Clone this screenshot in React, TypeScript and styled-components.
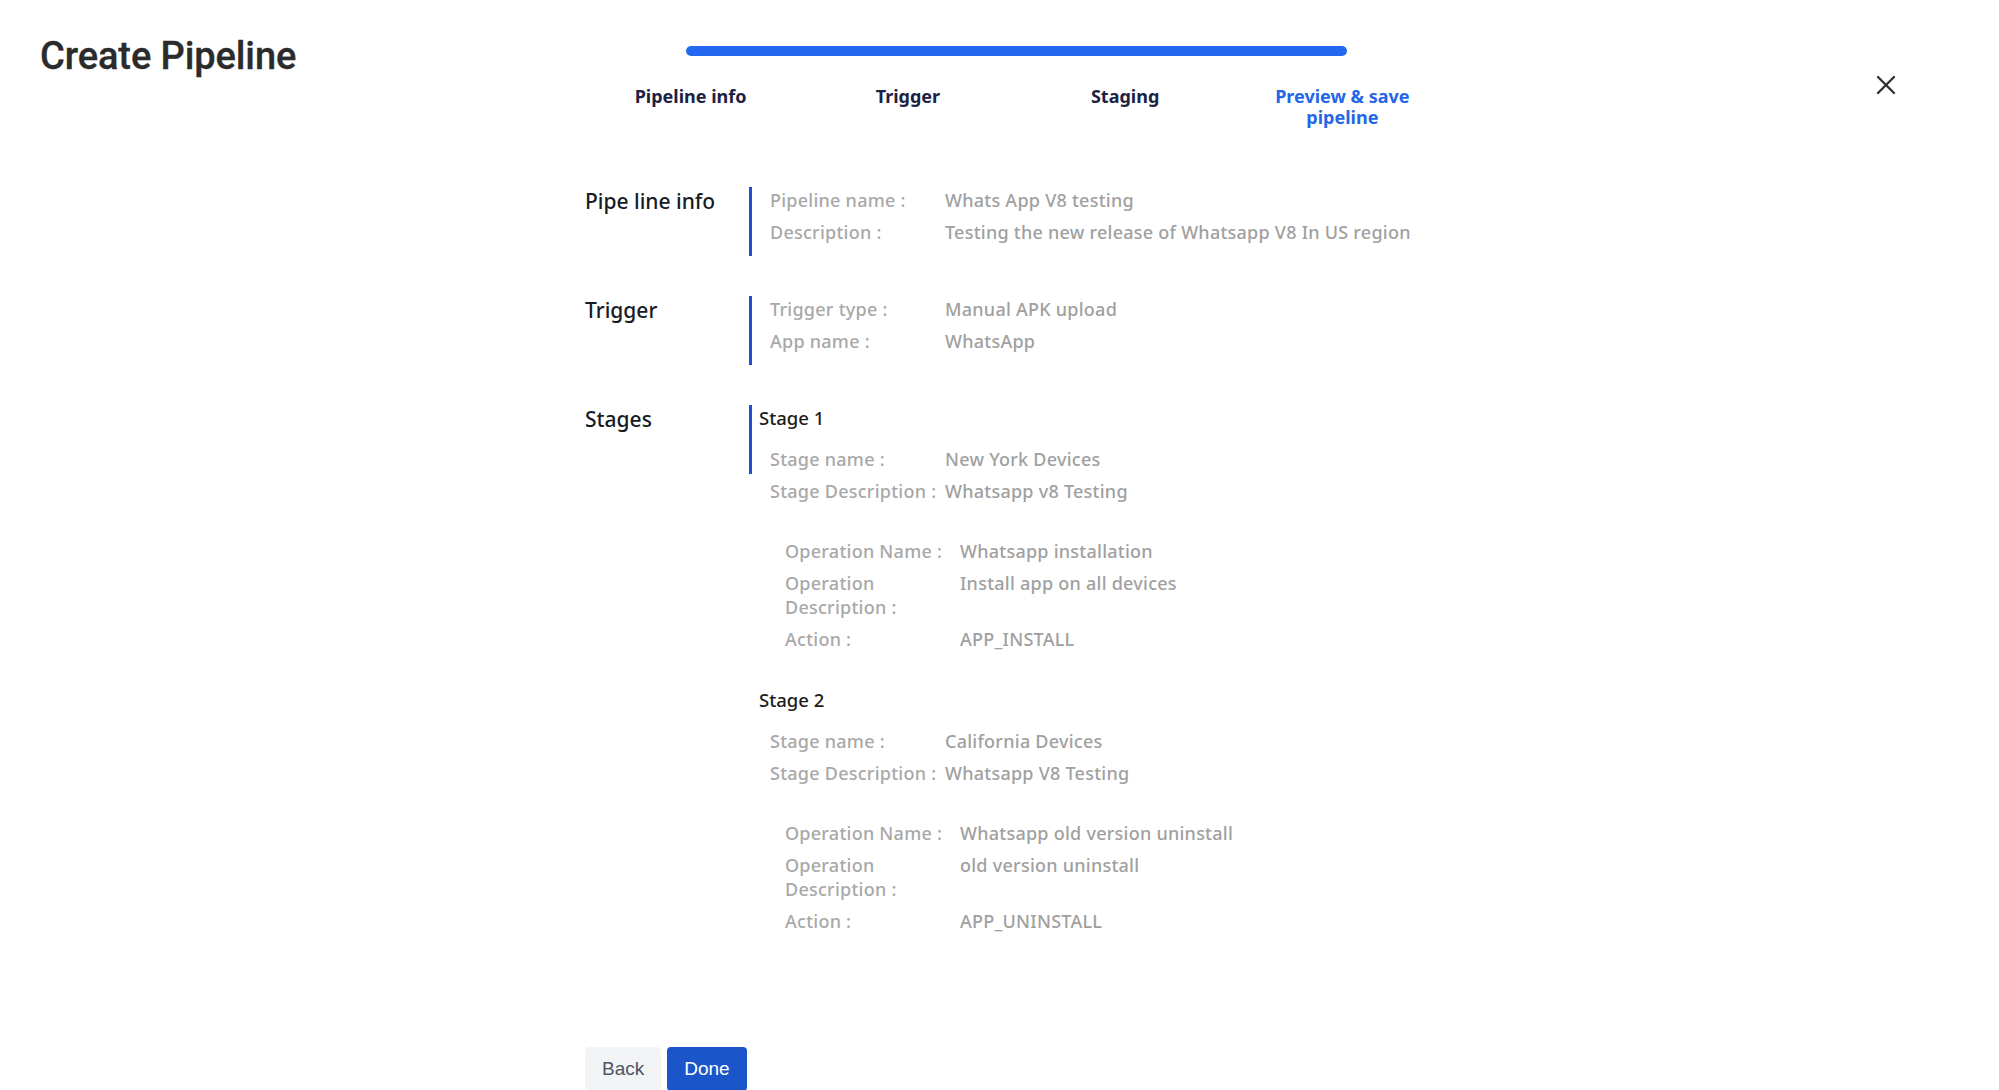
import React from "react";
import styled, { createGlobalStyle } from "styled-components";

const GlobalStyle = createGlobalStyle`
  html, body { margin: 0; padding: 0; background: #ffffff; }
  body { font-family: "Noto Sans", "Open Sans", sans-serif; -webkit-font-smoothing: antialiased; }
  * { box-sizing: border-box; }
`;

const Page = styled.div`
  display: grid;
  grid-template-columns: 585px 866px 1fr;
  grid-template-rows: 126px auto;
  width: 1999px;
  min-height: 1090px;
`;

const Title = styled.h1`
  margin: 32px 0 0 40px;
  font-family: Roboto, "Noto Sans", sans-serif;
  font-size: 38px;
  line-height: 48px;
  font-weight: 500;
  color: #2b2b2b;
  letter-spacing: -0.1px;
  -webkit-text-stroke: 0.3px #2b2b2b;
`;

const Steps = styled.div`
  display: flex;
  flex-direction: column;
  padding-top: 46px;
`;

const ProgressBar = styled.div`
  flex: none;
  height: 10px;
  margin: 0 104px 0 101px;
  border-radius: 5px;
  background: #2468f0;
`;

const StepList = styled.div`
  flex: none;
  display: grid;
  grid-template-columns: repeat(4, 1fr);
  margin: 30px 0 0 -3px;
`;

const Step = styled.div<{ $active?: boolean }>`
  text-align: center;
  font-size: 18px;
  line-height: 21px;
  font-weight: 700;
  color: ${(p) => (p.$active ? "#2466e8" : "#1b2244")};
  padding: 0 36px;
`;

const CloseCell = styled.div`
  display: flex;
  justify-content: flex-end;
  padding: 75px 103px 0 0;
`;

const CloseButton = styled.button`
  width: 20px;
  height: 20px;
  padding: 0;
  border: none;
  background: transparent;
  color: #333333;
  cursor: pointer;
  display: flex;
`;

const Content = styled.main`
  grid-column: 2;
  display: flex;
  flex-direction: column;
  gap: 40px;
  padding-top: 61px;
`;

const Section = styled.section`
  display: flex;
  align-items: flex-start;
`;

const SectionTitle = styled.h2`
  width: 164px;
  flex: none;
  margin: 0;
  padding-top: 1px;
  font-size: 21px;
  line-height: 26px;
  font-weight: 500;
  color: #161b26;
`;

const Divider = styled.div`
  width: 3px;
  height: 69px;
  flex: none;
  background: #1f4fd3;
`;

const SectionBody = styled.div`
  padding-left: 7px;
  padding-top: 1px;
  display: flex;
  flex-direction: column;
`;

const Details = styled.div<{ $indent: number }>`
  display: flex;
  flex-direction: column;
  gap: 8px;
  padding-left: ${(p) => p.$indent}px;
`;

const Row = styled.div`
  display: grid;
  grid-template-columns: 175px auto;
  font-size: 18px;
  line-height: 24px;
  letter-spacing: 0.25px;
`;

const Label = styled.span`
  color: #a8a8a8;
  font-weight: 500;
  padding-right: 2px;
`;

const Value = styled.span`
  color: #a0a0a0;
  font-weight: 500;
  white-space: nowrap;
`;

const StageTitle = styled.h3<{ $first?: boolean }>`
  margin: ${(p) => (p.$first ? "-1px" : "36px")} 0 16px 0;
  font-size: 18.5px;
  line-height: 26px;
  font-weight: 500;
  color: #1c1c1c;
`;

const Operations = styled(Details)`
  margin-top: 36px;
`;

const Actions = styled.div`
  display: flex;
  gap: 6px;
  margin-top: 74px;
`;

const Button = styled.button<{ $primary?: boolean }>`
  height: 44px;
  padding: 0 17px;
  border: none;
  border-radius: 4px;
  font-family: "Liberation Sans", Arial, sans-serif;
  font-size: 19px;
  cursor: pointer;
  background: ${(p) => (p.$primary ? "#1a56c9" : "#f3f4f6")};
  color: ${(p) => (p.$primary ? "#ffffff" : "#4b5563")};
`;

type Pair = [string, string];

const DetailRows: React.FC<{ rows: Pair[]; indent: number; ops?: boolean }> = ({ rows, indent, ops }) => {
  const Wrap = ops ? Operations : Details;
  return (
    <Wrap $indent={indent}>
      {rows.map(([l, v]) => (
        <Row key={l}>
          <Label>{l}</Label>
          <Value>{v}</Value>
        </Row>
      ))}
    </Wrap>
  );
};

const stages = [
  {
    title: "Stage 1",
    info: [
      ["Stage name :", "New York Devices"],
      ["Stage Description :", "Whatsapp v8 Testing"],
    ] as Pair[],
    ops: [
      ["Operation Name :", "Whatsapp installation"],
      ["Operation Description :", "Install app on all devices"],
      ["Action :", "APP_INSTALL"],
    ] as Pair[],
  },
  {
    title: "Stage 2",
    info: [
      ["Stage name :", "California Devices"],
      ["Stage Description :", "Whatsapp V8 Testing"],
    ] as Pair[],
    ops: [
      ["Operation Name :", "Whatsapp old version uninstall"],
      ["Operation Description :", "old version uninstall"],
      ["Action :", "APP_UNINSTALL"],
    ] as Pair[],
  },
];

export default function App() {
  return (
    <>
      <GlobalStyle />
      <Page>
        <Title>Create Pipeline</Title>
        <Steps>
          <ProgressBar />
          <StepList>
            <Step>Pipeline info</Step>
            <Step>Trigger</Step>
            <Step>Staging</Step>
            <Step $active>Preview &amp; save pipeline</Step>
          </StepList>
        </Steps>
        <CloseCell>
          <CloseButton aria-label="Close">
            <svg width="20" height="20" viewBox="0 0 20 20" fill="none" stroke="currentColor" strokeWidth="2.4" strokeLinecap="round">
              <line x1="2" y1="2" x2="18" y2="18" />
              <line x1="18" y1="2" x2="2" y2="18" />
            </svg>
          </CloseButton>
        </CloseCell>

        <Content>
          <Section>
            <SectionTitle>Pipe line info</SectionTitle>
            <Divider />
            <SectionBody>
              <DetailRows
                indent={11}
                rows={[
                  ["Pipeline name :", "Whats App V8 testing"],
                  ["Description :", "Testing the new release of Whatsapp V8 In US region"],
                ]}
              />
            </SectionBody>
          </Section>
          <Section>
            <SectionTitle>Trigger</SectionTitle>
            <Divider />
            <SectionBody>
              <DetailRows
                indent={11}
                rows={[
                  ["Trigger type :", "Manual APK upload"],
                  ["App name :", "WhatsApp"],
                ]}
              />
            </SectionBody>
          </Section>
          <Section>
            <SectionTitle>Stages</SectionTitle>
            <Divider />
            <SectionBody>
              {stages.map((s, i) => (
                <React.Fragment key={s.title}>
                  <StageTitle $first={i === 0}>{s.title}</StageTitle>
                  <DetailRows indent={11} rows={s.info} />
                  <DetailRows indent={26} rows={s.ops} ops />
                </React.Fragment>
              ))}
            </SectionBody>
          </Section>
          <Actions>
            <Button>Back</Button>
            <Button $primary>Done</Button>
          </Actions>
        </Content>
      </Page>
    </>
  );
}
